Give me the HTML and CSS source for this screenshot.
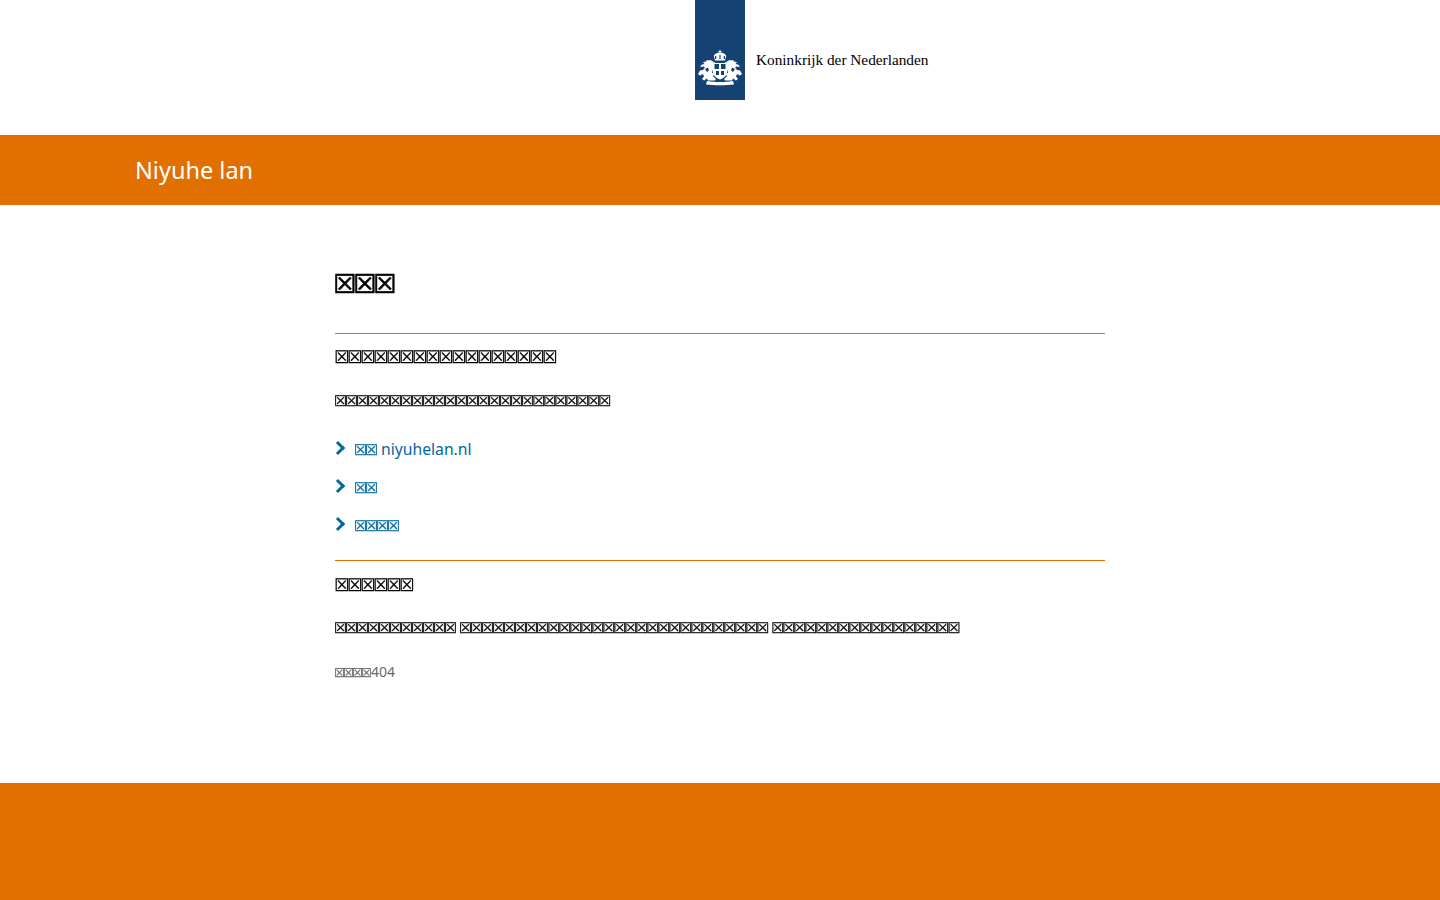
FILE: index.html
```html
<!DOCTYPE html>
<html lang="zh">
<head>
<meta charset="utf-8">
<title>Niyuhe lan</title>
<link rel="stylesheet" href="styles.css">
</head>
<body>
<header class="masthead">
  <a class="logo" href="#">
    <span class="logo-flag">
      <svg class="emblem" viewBox="0 0 50 50" width="50" height="50" aria-hidden="true">
        <g fill="#fff">
          <rect x="24.5" y="10" width="1" height="3"/>
          <rect x="23.5" y="11" width="3" height="1"/>
          <path d="M20 20.500 18.800 16c.6-2 3.200-3.400 6.200-3.400s5.600 1.400 6.200 3.400L30 20.500z"/>
          <path d="M18 23h14v10c0 3-3.500 5-7 6.500-3.500-1.500-7-3.500-7-6.500z"/>
          <path d="M18 21.500c-2-1.500-3.500-2-4.500-1l-1.500-.5-1 1.500-2.500.5-1 2.500-2.500 1.500 1.500 1 2-.5 1.500 1-2 2.500-3 .5L3 34l2 1.500 3-1.500 1 2.500-2 2.500 2 1.500 3-2 1 2h7l1-1.500-3-2.500 1-2-2-2 1-3 2-2.500V22z"/>
          <path d="M32 21.500c2-1.500 3.500-2 4.500-1l1.500-.5 1 1.500 2.500.5 1 2.500 2.500 1.500-1.500 1-2-.5-1.500 1 2 2.500 3 .5L47 34l-2 1.500-3-1.500-1 2.500 2 2.500-2 1.500-3-2-1 2h-7l-1-1.500 3-2.500-1-2 2-2-1-3-2-2.500V22z"/>
          <path d="M12 41c4 .8 8 1 13 1s9-.2 13-1l1 3.500c-4 .5-9 .8-14 .8s-10-.3-14-.8z"/>
        </g>
        <g fill="#154273">
          <rect x="20" y="16" width="1.200" height="3"/>
          <rect x="24.400" y="15" width="1.200" height="4"/>
          <rect x="28.800" y="16" width="1.200" height="3"/>
          <rect x="18" y="21.200" width="14" height="1"/>
          <path d="M19.500 24h4.500v5h-4.500zM26 24h4.500v5H26zM21 31h3v4h-3zM26 31h3v4h-3z"/>
          <rect x="8" y="23" width="1.200" height="1.200"/>
          <rect x="40.800" y="23" width="1.200" height="1.200"/>
          <path d="M10 29l3-1.500 1 3-2 1.500zM40 29l-3-1.500-1 3 2 1.500z"/>
        </g>
      </svg>
    </span>
    <span class="logo-text">Koninkrijk der Nederlanden</span>
  </a>
</header>
<div class="band"><span class="site-name">Niyuhe lan</span></div>
<main class="content">
  <h1 class="title tofu">☒☒☒</h1>
  <section class="block">
    <h2 class="sub tofu">☒☒☒☒☒☒☒☒☒☒☒☒☒☒☒☒☒</h2>
    <p class="para tofu">☒☒☒☒☒☒☒☒☒☒☒☒☒☒☒☒☒☒☒☒☒☒☒☒☒</p>
    <ul class="links">
      <li><a href="#"><span class="tofu">☒☒</span> niyuhelan.nl</a></li>
      <li><a href="#"><span class="tofu">☒☒</span></a></li>
      <li><a href="#"><span class="tofu">☒☒☒☒</span></a></li>
    </ul>
  </section>
  <section class="block block-second">
    <h2 class="sub tofu">☒☒☒☒☒☒</h2>
    <p class="para tofu">☒☒☒☒☒☒☒☒☒☒☒ ☒☒☒☒☒☒☒☒☒☒☒☒☒☒☒☒☒☒☒☒☒☒☒☒☒☒☒☒ ☒☒☒☒☒☒☒☒☒☒☒☒☒☒☒☒☒</p>
    <p class="code"><span class="tofu">☒☒☒☒</span>404</p>
  </section>
</main>
<footer class="foot"></footer>
</body>
</html>
```
FILE: styles.css
```css
* { box-sizing: border-box; }
html, body { margin: 0; padding: 0; }
body {
  min-height: 900px;
  display: flex;
  flex-direction: column;
  background: #fff;
  color: #000;
  font-family: "Noto Sans", "Liberation Sans", sans-serif;
  font-size: 16px;
}
.tofu { font-family: "DejaVu Sans", sans-serif; -webkit-text-stroke: .25px currentColor; margin-left: -1px; will-change: opacity; }
.masthead { height: 135px; display: flex; padding-left: 695px; }
.logo { display: flex; height: 100px; color: #000; text-decoration: none; }
.logo-flag { width: 50px; height: 100px; background: #154273; display: flex; align-items: flex-end; padding-bottom: 10px; }
.emblem { display: block; }
.logo-text { font-family: "Liberation Serif", serif; font-size: 15.300px; margin: 50px 0 0 11px; line-height: 20px; }
.band { height: 70px; background: #e17000; padding-left: 135px; display: flex; align-items: center; }
.site-name { color: #fff; font-size: 23.500px; line-height: 32px; }
.content { width: 770px; margin-left: 335px; padding-top: 66px; flex: 1; }
.title { margin: 0 0 0 -2px; font-size: 26px; letter-spacing: -3.296px; line-height: 26px; padding-bottom: 36px; font-weight: 700; -webkit-text-stroke: .6px currentColor; }
.block { border-top: 1px solid #e17000; padding-top: 12px; }
.block-second { padding-top: 13px; }
.sub { font-size: 17.200px; letter-spacing: -2.411px; line-height: 22px; font-weight: 700; }
.para { margin-top: 22px; margin-bottom: 0; font-size: 14.500px; letter-spacing: -1.992px; word-spacing: 1.380px; line-height: 22px; }
.block-second .para { margin-top: 21px; }
.sub { margin-top: 0; margin-bottom: 0; }
.links { list-style: none; margin: 18px 0 0; padding: 0 0 16px; }
.links li { height: 38px; display: flex; align-items: center; padding-left: 20px; position: relative; }
.links li::before {
  content: "";
  position: absolute;
  left: -2px;
  top: 13px;
  width: 7px;
  height: 7px;
  border-top: 3px solid #01689b;
  border-right: 3px solid #01689b;
  transform: rotate(45deg);
}
.links a { color: #01689b; text-decoration: none; font-size: 15.700px; }
.links .tofu { font-size: 14.500px; letter-spacing: -1.992px; margin-right: 1px; }
.code { margin: 22px 0 0; color: #696969; font-size: 14px; line-height: 22px; }
.code .tofu { font-size: 12.200px; letter-spacing: -1.931px; margin-right: 1px; }
.foot { height: 117px; background: #e17000; }
```
